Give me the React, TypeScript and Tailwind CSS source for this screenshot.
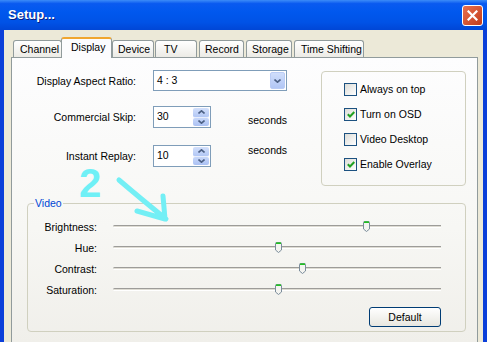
import React from "react";

const TABS = [
  { name: "Channel", cls: "w-[49px] pl-[6px]" },
  { name: "Display", cls: "w-[51px] -ml-[1px] pl-[9px]", active: true },
  { name: "Device", cls: "w-[42px] pl-[5px]" },
  { name: "TV", cls: "w-[42px] ml-[1px] pl-[8px]" },
  { name: "Record", cls: "w-[45px] ml-[2px] pl-[5px]" },
  { name: "Storage", cls: "w-[46px] ml-[2px] pl-[5px]" },
  { name: "Time Shifting", cls: "w-[70px] ml-[2px] pl-[6px]" },
];

const OPTIONS = [
  { label: "Always on top", checked: false },
  { label: "Turn on OSD", checked: true },
  { label: "Video Desktop", checked: false },
  { label: "Enable Overlay", checked: true },
];

const SLIDERS = [
  { label: "Brightness:", value: 0.771 },
  { label: "Hue:", value: 0.503 },
  { label: "Contrast:", value: 0.576 },
  { label: "Saturation:", value: 0.503 },
];

function Chevron({ up }: { up?: boolean }) {
  return (
    <svg width="7" height="4" viewBox="0 0 7 4">
      <path
        d={up ? "M0.5 3.5 L3.5 0.8 L6.5 3.5" : "M0.5 0.5 L3.5 3.2 L6.5 0.5"}
        stroke="#4D6185"
        strokeWidth="1.6"
        fill="none"
      />
    </svg>
  );
}

function Spin({ value }: { value: string }) {
  return (
    <div className="w-[58px] h-[22px] border border-[#7F9DB9] bg-white flex">
      <div className="flex-1 pl-[3px] pt-[3px] leading-[13px]">{value}</div>
      <div className="w-[16px] flex flex-col py-[1px] mr-[1px]">
        <div className="flex-1 flex items-center justify-center rounded-[2px] bg-gradient-to-b from-[#D3E0FB] to-[#B2C7F5] border-b border-[#E8EEFC]">
          <Chevron up />
        </div>
        <div className="flex-1 flex items-center justify-center rounded-[2px] bg-gradient-to-b from-[#C8D8FA] to-[#ABC1F3]">
          <Chevron />
        </div>
      </div>
    </div>
  );
}

function Check({ checked }: { checked: boolean }) {
  return (
    <div className="w-[13px] h-[13px] border border-[#1C5180] bg-gradient-to-br from-[#DCDCD7] to-white flex items-center justify-center">
      {checked && (
        <svg width="8" height="7" viewBox="0 0 8 7">
          <path d="M0.8 3.2 L3 5.5 L7.3 1" stroke="#21A121" strokeWidth="2" fill="none" />
        </svg>
      )}
    </div>
  );
}

function Thumb() {
  return (
    <svg width="7" height="11" viewBox="0 0 7 11">
      <path d="M0.5 1.5 Q0.5 0.5 1.5 0.5 L5.5 0.5 Q6.5 0.5 6.5 1.5 L6.5 8 L3.5 10.5 L0.5 8 Z" fill="#F4F4F0" stroke="#7B8C9B" />
      <path d="M1 1.2 L6 1.2" stroke="#21C121" strokeWidth="1.6" />
    </svg>
  );
}

export default function App() {
  return (
    <div className="relative w-[487px] h-[342px] overflow-hidden flex flex-col font-['Liberation_Sans',Arial,sans-serif] text-[10.5px] text-black">
      {/* Title bar */}
      <div className="h-[30px] shrink-0 flex items-center pl-[8px] pr-[4px] bg-[linear-gradient(180deg,#3C8CF8_0%,#0A5AF0_12%,#0058EE_40%,#0052E6_75%,#0046D6_100%)]">
        <div className="text-white font-bold text-[13px] [text-shadow:1px_1px_#0A1E80]">Setup...</div>
        <div className="ml-auto w-[21px] h-[21px] rounded-[3px] border border-white bg-gradient-to-br from-[#E8704E] to-[#C33B18] flex items-center justify-center">
          <svg width="11" height="11" viewBox="0 0 11 11">
            <path d="M1.5 1.5 L9.5 9.5 M9.5 1.5 L1.5 9.5" stroke="white" strokeWidth="2.2" strokeLinecap="square" />
          </svg>
        </div>
      </div>

      {/* Body */}
      <div className="flex-1 flex flex-col bg-[#ECE9D8] border-l-[4px] border-r-[4px] border-[#0B3FD9] pt-[7px] pl-[7px] pr-[5px]">
        {/* Tabs */}
        <div className="flex items-end h-[20px] pl-[2px] relative z-10 whitespace-nowrap">
          {TABS.map((t) =>
            t.active ? (
              <div
                key={t.name}
                className={`${t.cls} h-[21px] -mb-[1px] bg-[#FCFCFE] border-x border-[#919B9C] border-t-[2px] border-t-[#F0A630] rounded-t-[3px] pt-[2px] leading-[13px]`}
              >
                {t.name}
              </div>
            ) : (
              <div
                key={t.name}
                className={`${t.cls} h-[17px] bg-gradient-to-b from-white to-[#ECEBE6] border border-b-0 border-[#919B9C] rounded-t-[3px] pt-[2px] leading-[13px]`}
              >
                {t.name}
              </div>
            )
          )}
        </div>

        {/* Panel */}
        <div className="flex-1 flex flex-col border border-b-0 border-[#919B9C] bg-[linear-gradient(180deg,#FDFDFE_0%,#F7F7F4_60%,#F0EFEA_100%)] pl-[15px] pr-[11px]">
          <div className="flex pt-[12px]">
            {/* Form */}
            <div className="w-[294px] flex flex-col">
              <div className="flex items-center h-[21px]">
                <div className="w-[109px] text-right pt-[2px]">Display Aspect Ratio:</div>
                <div className="ml-[17px] w-[134px] h-[21px] border border-[#7F9DB9] bg-white flex">
                  <div className="flex-1 pl-[3px] pt-[3px] leading-[13px]">4 : 3</div>
                  <div className="w-[15px] my-[1px] mr-[1px] rounded-[2px] bg-gradient-to-b from-[#D0DEFB] to-[#B1C6F5] border border-[#BACCF5] flex items-center justify-center">
                    <Chevron />
                  </div>
                </div>
              </div>
              <div className="flex items-center h-[22px] mt-[15px]">
                <div className="w-[109px] text-right pt-[2px]">Commercial Skip:</div>
                <div className="ml-[17px]">
                  <Spin value="30" />
                </div>
                <div className="ml-[37px] self-end mb-[1px] leading-[13px]">seconds</div>
              </div>
              <div className="flex items-center h-[22px] mt-[17px]">
                <div className="w-[109px] text-right pt-[2px]">Instant Replay:</div>
                <div className="ml-[17px]">
                  <Spin value="10" />
                </div>
                <div className="ml-[37px] self-start -mt-[1px] leading-[13px]">seconds</div>
              </div>
            </div>

            {/* Options */}
            <div className="mt-[1px] w-[145px] h-[115px] border border-[#D0D0BF] rounded-[4px] pl-[22px] pt-[11px] flex flex-col gap-[12px]">
              {OPTIONS.map((o) => (
                <div key={o.label} className="flex items-center h-[13px]">
                  <Check checked={o.checked} />
                  <span className="ml-[3px] leading-[13px]">{o.label}</span>
                </div>
              ))}
            </div>
          </div>

          {/* Video */}
          <fieldset className="mt-[11px] w-[439px] border border-[#D0D0BF] rounded-[4px] flex flex-col pb-[4px]">
            <legend className="ml-[6px] px-[1px] text-[#0046D5] leading-[13px]">Video</legend>
            <div className="pt-[6px] flex flex-col">
              {SLIDERS.map((s) => (
                <div key={s.label} className="flex items-center h-[21px]">
                  <div className="w-[69px] text-right pt-[2px]">{s.label}</div>
                  <div className="ml-[16px] w-[328px] relative">
                    <div className="h-[3px] rounded-l-[2px] border-t border-[#9D9C99] bg-[#DEDCD3] border-b border-b-white" />
                    <div className="absolute top-[-4px]" style={{ left: `${s.value * 328 - 3}px` }}>
                      <Thumb />
                    </div>
                  </div>
                </div>
              ))}
              <button className="self-end mr-[24px] mt-[7px] w-[72px] h-[20px] rounded-[3px] border border-[#003C74] bg-gradient-to-b from-white to-[#E8E7E0] leading-[13px]">
                Default
              </button>
            </div>
          </fieldset>
        </div>
      </div>

      {/* Annotation */}
      <div className="absolute inset-0 pointer-events-none">
        <div className="absolute left-[79px] top-[165px] text-[40px] font-bold leading-[36px] text-[#6FF0F6]">2</div>
        <svg className="absolute inset-0" width="487" height="342" viewBox="0 0 487 342">
          <path
            d="M119 180 Q140 198 166 219 M163 196 L165 219 L137 211"
            stroke="#73EFF5"
            strokeWidth="5"
            strokeLinecap="round"
            strokeLinejoin="round"
            fill="none"
          />
        </svg>
      </div>
    </div>
  );
}
